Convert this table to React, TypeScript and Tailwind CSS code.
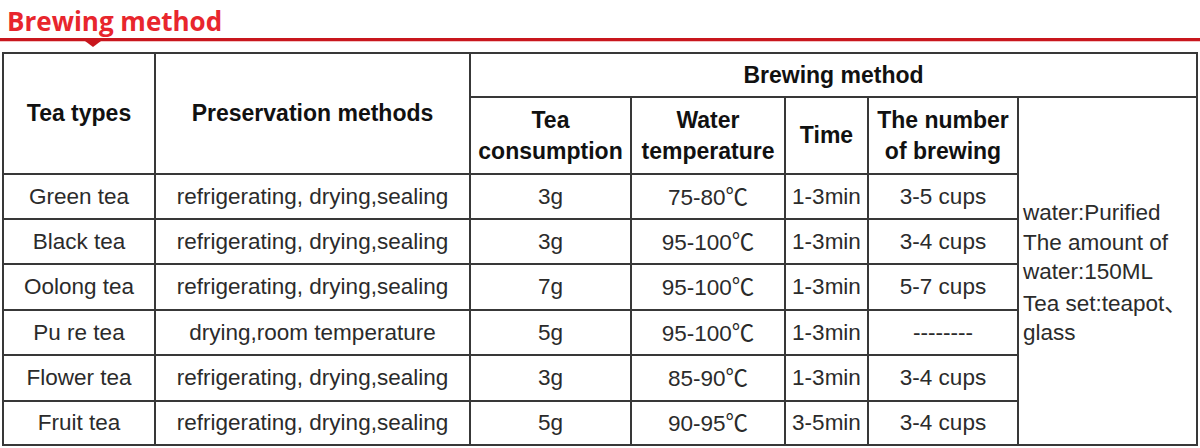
import React from 'react'

// rows of the tea table
const rows = [
  { type: 'Green tea', keep: 'refrigerating, drying,sealing', amount: '3g', temp: '75-80', time: '1-3min', cups: '3-5 cups' },
  { type: 'Black tea', keep: 'refrigerating, drying,sealing', amount: '3g', temp: '95-100', time: '1-3min', cups: '3-4 cups' },
  { type: 'Oolong tea', keep: 'refrigerating, drying,sealing', amount: '7g', temp: '95-100', time: '1-3min', cups: '5-7 cups' },
  { type: 'Pu re tea', keep: 'drying,room temperature', amount: '5g', temp: '95-100', time: '1-3min', cups: '--------' },
  { type: 'Flower tea', keep: 'refrigerating, drying,sealing', amount: '3g', temp: '85-90', time: '1-3min', cups: '3-4 cups' },
  { type: 'Fruit tea', keep: 'refrigerating, drying,sealing', amount: '5g', temp: '90-95', time: '3-5min', cups: '3-4 cups' },
]

const rowHeights = ['h-[45px]', 'h-[45px]', 'h-[46px]', 'h-[45px]', 'h-[46px]', 'h-[44px]']

const cell = 'border-2 border-[#383838] p-0 text-center align-middle'
const head = `${cell} font-bold text-[23px] text-[#111] leading-[31px]`

export default function App() {
  return (
    <div
      className="w-[1200px] h-[448px] bg-white overflow-hidden"
      style={{ fontFamily: '"Liberation Sans", Arial, "Noto Sans CJK SC", sans-serif' }}
    >
      {/* Title */}
      <div className="h-[38px] pl-[7px] flex items-end">
        <span
          className="text-[26px] font-bold leading-[33px] text-[#e8262d]"
          style={{ fontFamily: '"Open Sans", "Noto Sans", sans-serif' }}
        >
          Brewing method
        </span>
      </div>
      <div className="relative h-[3px] bg-[#c8161d]">
        <div className="absolute left-[85px] top-[3px] w-0 h-0 border-l-[8px] border-r-[8px] border-t-[6px] border-l-transparent border-r-transparent border-t-[#c8161d]" />
      </div>
      <div className="h-[1px] bg-[#f4c2c4]" />

      {/* Table */}
      <table className="mt-[10px] ml-[2px] w-[1196px] table-fixed border-collapse text-[22.5px] text-[#2b2b2b]">
        <colgroup>
          <col className="w-[152px]" />
          <col className="w-[315px]" />
          <col className="w-[161px]" />
          <col className="w-[154px]" />
          <col className="w-[83px]" />
          <col className="w-[150px]" />
          <col className="w-[179px]" />
        </colgroup>
        <thead>
          <tr className="h-[44px]">
            <th rowSpan={2} className={head}>Tea types</th>
            <th rowSpan={2} className={head}>Preservation methods</th>
            <th colSpan={5} className={head}>Brewing method</th>
          </tr>
          <tr className="h-[77px]">
            <th className={head}>Tea<br />consumption</th>
            <th className={head}>Water<br />temperature</th>
            <th className={head}>Time</th>
            <th className={head}>The number<br />of brewing</th>
            <th className={`${cell} border-b-0`} />
          </tr>
        </thead>
        <tbody>
          {rows.map((r, i) => (
            <tr key={r.type} className={rowHeights[i]}>
              <td className={cell}>{r.type}</td>
              <td className={cell}>{r.keep}</td>
              <td className={cell}>{r.amount}</td>
              <td className={cell}>
                {r.temp}
                <span style={{ fontFamily: '"Noto Sans CJK SC", sans-serif' }}>℃</span>
              </td>
              <td className={cell}>{r.time}</td>
              <td className={cell}>{r.cups}</td>
              {i === 0 && (
                <td rowSpan={6} className="border-2 border-t-0 border-[#383838] align-top pt-[24px] pl-[4px] text-left leading-[29.5px]">
                  water:Purified<br />
                  The amount of<br />
                  water:150ML<br />
                  Tea set:teapot
                  <span style={{ fontFamily: '"Noto Sans CJK SC", sans-serif' }}>、</span>
                  <br />
                  glass
                </td>
              )}
            </tr>
          ))}
        </tbody>
      </table>
    </div>
  )
}
